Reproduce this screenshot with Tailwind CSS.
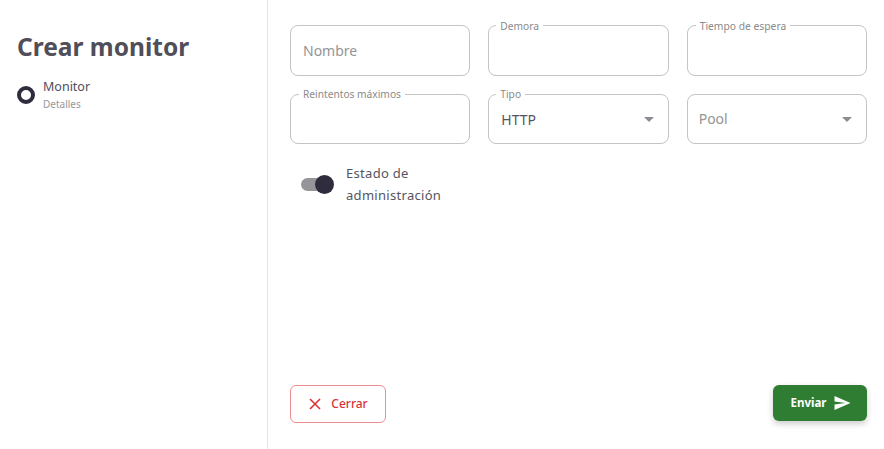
<!DOCTYPE html>
<html lang="en">
<head>
    <meta charset="UTF-8">
    <title>Crear monitor</title>
    <script src="https://cdn.jsdelivr.net/npm/@tailwindcss/browser@4"></script>
</head>
<body class="bg-white font-['Noto_Sans',sans-serif]">
    <div class="flex h-[449px] w-[884px] overflow-hidden">
        <!-- Stepper -->
        <aside class="w-[268px] shrink-0 border-r border-[#e5e5e5] pl-[17px] pt-[30px]">
            <h1 class="text-[24.5px] leading-[34px] font-bold text-[#4f4e59]">Crear monitor</h1>
            <div class="mt-[14px] flex items-center gap-[8px]">
                <span class="h-[18px] w-[18px] rounded-full border-[4px] border-[#2e2c3d]"></span>
                <div>
                    <div class="text-[12.5px] leading-[18px] text-[#4f4e59] font-[450]">Monitor</div>
                    <div class="text-[10px] leading-[16px] text-[#97969d]">Detalles</div>
                </div>
            </div>
        </aside>

        <!-- Form -->
        <main class="flex flex-1 flex-col pl-[22px] pr-[17px] pt-[25px] pb-[26px]">
            <div class="grid grid-cols-3 gap-x-[18px] gap-y-[18px]">
                <div class="flex h-[51px] items-center rounded-[8px] border border-[#c4c4c4] px-[12px]">
                    <span class="text-[14px] text-[#949494]">Nombre</span>
                </div>
                <div class="relative h-[51px] rounded-[8px] border border-[#c4c4c4]">
                    <span class="absolute left-[7px] top-[-7px] bg-white px-[4px] text-[10.2px] leading-[14px] text-[#8a8a8a]">Demora</span>
                </div>
                <div class="relative h-[51px] rounded-[8px] border border-[#c4c4c4]">
                    <span class="absolute left-[8px] top-[-7px] bg-white px-[4px] text-[10.3px] leading-[14px] text-[#8a8a8a]">Tiempo de espera</span>
                </div>
                <div class="relative h-[50px] rounded-[8px] border border-[#c4c4c4]">
                    <span class="absolute left-[8px] top-[-8px] bg-white px-[4px] text-[10.2px] leading-[14px] text-[#8a8a8a]">Reintentos máximos</span>
                </div>
                <div class="relative flex h-[50px] items-center justify-between rounded-[8px] border border-[#c4c4c4] pl-[12px] pr-[14px]">
                    <span class="absolute left-[7px] top-[-8px] bg-white px-[4px] text-[10.2px] leading-[14px] text-[#8a8a8a]">Tipo</span>
                    <span class="text-[14px] text-[#55545e]">HTTP</span>
                    <span class="h-0 w-0 border-x-[5px] border-t-[5px] border-x-transparent border-t-[#8d8c94]"></span>
                </div>
                <div class="flex h-[50px] items-center justify-between rounded-[8px] border border-[#c4c4c4] pl-[11px] pr-[14px]">
                    <span class="mb-[1px] text-[14px] text-[#949494]">Pool</span>
                    <span class="h-0 w-0 border-x-[5px] border-t-[5px] border-x-transparent border-t-[#8d8c94]"></span>
                </div>
            </div>

            <div class="mt-[18px] flex items-center pl-[11px]">
                <div class="relative h-[13px] w-[30px] rounded-full bg-[#969599]">
                    <span class="absolute right-[-3px] top-[-3px] h-[19px] w-[19px] rounded-full bg-[#2e2c3d]"></span>
                </div>
                <label class="ml-[15px] w-[110px] text-[13px] leading-[22px] tracking-[0.3px] text-[#55545e]">Estado de administración</label>
            </div>

            <div class="mt-auto flex items-start justify-between">
                <button class="flex h-[38px] w-[96px] items-center justify-center gap-[9px] rounded-[6px] border border-[#ee8f8f] text-[12px] text-[#d9333a] font-[500]">
                    <svg class="h-[14px] w-[14px]" viewBox="0 0 14 14" fill="none" stroke="#d9333a" stroke-width="1.6"><path d="M2 2l10 10M12 2L2 12"/></svg>
                    Cerrar
                </button>
                <button class="flex h-[36px] w-[94px] items-center justify-center gap-[8px] rounded-[6px] bg-[#2e7d32] pl-[2px] text-[11.5px] font-bold text-white shadow-[0_3px_6px_rgba(0,0,0,0.2)]">
                    Enviar
                    <svg class="h-[16px] w-[17px]" viewBox="0 0 17 16" fill="#fff"><path d="M0.5 1l16 7-16 7v-5.5l11-1.5-11-1.5z"/></svg>
                </button>
            </div>
        </main>
    </div>
</body>
</html>
